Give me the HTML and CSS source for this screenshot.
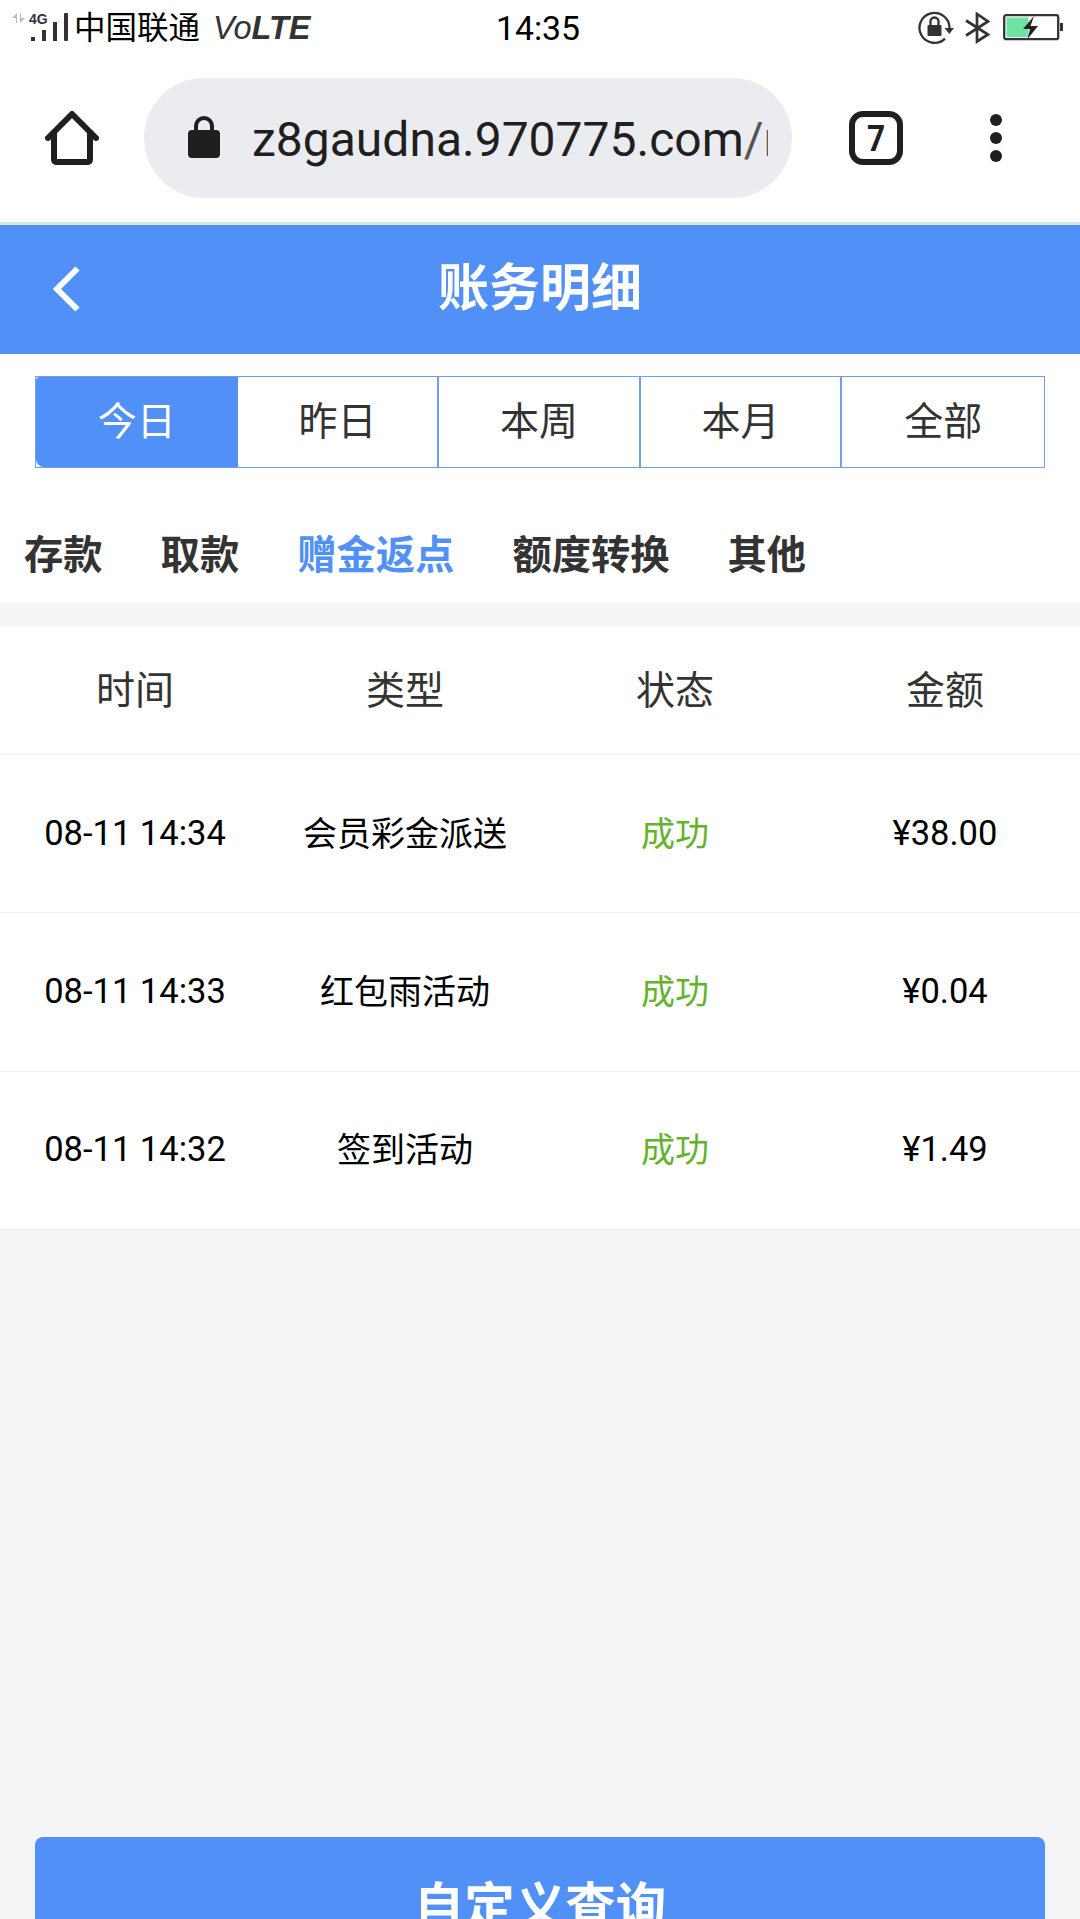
FILE: index.html
```html
<!DOCTYPE html>
<html lang="zh-CN">
<head>
<meta charset="utf-8">
<title>账务明细</title>
<link rel="stylesheet" href="styles.css">
</head>
<body>
<div class="status">
  <div class="status-left">
    <svg class="signal" width="58" height="34" viewBox="0 0 58 34">
      <path d="M0 7l5-5v10H4V7zM8 2h1v5h4l-5 5z" fill="#bdbdbd"/>
      <g fill="#333"><rect x="19" y="26" width="4" height="4"/><rect x="30" y="19" width="4" height="11"/><rect x="41" y="11" width="4" height="19"/><rect x="52" y="2" width="4" height="28" rx="1"/></g>
      <text class="net" x="17" y="13">4G</text>
    </svg>
    <span class="carrier">中国联通</span>
    <span class="volte">Vo<b>LTE</b></span>
  </div>
  <span class="clock">14:35</span>
  <div class="status-right">
    <svg width="37" height="34" viewBox="0 0 37 34">
      <path d="M31.500 17A15 15 0 1 0 27 27.600" fill="none" stroke="#333" stroke-width="2.300"/>
      <path d="M26.500 17H36l-4.700 6z" fill="#333"/>
      <rect x="9.500" y="14" width="14" height="11" rx="1" fill="#333"/>
      <path d="M12.500 15v-4.500a4 4 0 0 1 8 0V15" fill="none" stroke="#333" stroke-width="2.300"/>
    </svg>
    <svg width="26" height="34" viewBox="0 0 26 34"><path d="M1 9.500l22 14-11 7V3l11 7.500L1 24.500" fill="none" stroke="#333" stroke-width="2.700"/></svg>
    <svg class="battery" width="61" height="28" viewBox="0 0 61 28">
      <rect x="1.200" y="1.200" width="54" height="24" rx="2" fill="#fff" stroke="#333" stroke-width="2.300"/>
      <rect x="3.500" y="3.500" width="22" height="19.500" fill="#70e3a4"/>
      <path d="M31 2L20 15h7l-2.500 10L35 12h-7.500z" fill="#222"/>
      <rect x="57" y="9" width="3" height="8" fill="#333"/>
    </svg>
  </div>
</div>
<div class="browser">
  <svg class="home" width="54" height="54" viewBox="0 0 54 54" fill="none" stroke="#1f1f1f" stroke-width="6">
    <path d="M3 27L27 3l24 24" stroke-linecap="round" stroke-linejoin="round"/><path d="M9 22v26q0 3 3 3h30q3 0 3-3V22"/>
  </svg>
  <div class="address">
    <svg class="lock" width="32" height="42" viewBox="0 0 32 42"><rect y="14" width="32" height="28" rx="4" fill="#1f1f1f"/><path d="M8 15v-5a8 8 0 0 1 16 0v5" fill="none" stroke="#1f1f1f" stroke-width="4"/></svg>
    <div class="url">z8gaudna.970775.com<span class="path">/r</span></div>
  </div>
  <div class="tabs-count"><span>7</span></div>
  <svg class="more" width="12" height="48" viewBox="0 0 12 48" fill="#1f1f1f"><circle cx="6" cy="6" r="6"/><circle cx="6" cy="24" r="6"/><circle cx="6" cy="42" r="6"/></svg>
</div>
<header class="header">
  <svg class="back" width="28" height="46" viewBox="0 0 28 46"><path d="M25.500 2.500L5 23l20.500 20.500" fill="none" stroke="#fff" stroke-width="6"/></svg>
  <h1 class="title">账务明细</h1>
</header>
<section class="filters">
  <div class="range"><span class="on">今日</span><span>昨日</span><span>本周</span><span>本月</span><span>全部</span></div>
  <nav class="kinds"><span>存款</span><span>取款</span><span class="current">赠金返点</span><span>额度转换</span><span>其他</span></nav>
</section>
<section class="table">
  <div class="row head"><span>时间</span><span>类型</span><span>状态</span><span>金额</span></div>
  <div class="row"><span class="num">08-11 14:34</span><span>会员彩金派送</span><span class="ok">成功</span><span class="num">¥38.00</span></div>
  <div class="row"><span class="num">08-11 14:33</span><span>红包雨活动</span><span class="ok">成功</span><span class="num">¥0.04</span></div>
  <div class="row"><span class="num">08-11 14:32</span><span>签到活动</span><span class="ok">成功</span><span class="num">¥1.49</span></div>
</section>
<button class="query">自定义查询</button>
</body>
</html>
```
FILE: styles.css
```css
* { box-sizing: border-box; }
body {
  margin: 0;
  width: 1080px;
  height: 1919px;
  overflow: hidden;
  display: flex;
  flex-direction: column;
  background: #f5f5f8;
  color: #333;
  font-family: Roboto, "Noto Sans CJK SC", sans-serif;
}
svg { display: block; flex: none; }
.status {
  height: 57px;
  flex: none;
  display: grid;
  grid-template-columns: 1fr auto 1fr;
  align-items: center;
  padding: 0 16px 2px 12px;
  background: #fff;
  color: #000;
}
.status-left, .status-right { display: flex; align-items: center; }
.status-right { justify-content: flex-end; gap: 10px; }
.battery { margin-left: 2px; }
.net { font: bold 14px "Liberation Sans", sans-serif; fill: #333; }
.carrier { font-size: 31.500px; line-height: 50px; margin-left: 4px; padding-top: 2px; }
.volte { font: italic 32.500px "Liberation Sans", sans-serif; color: #333; margin-left: 13px; padding-top: 2px; }
.clock { font-size: 33.800px; padding-top: 2px; }
.browser {
  height: 168px;
  flex: none;
  display: flex;
  align-items: flex-start;
  padding: 21px 78px 0 45px;
  background: #fff;
  border-bottom: 3px solid #dce3e7;
}
.home { margin-top: 33px; }
.address {
  width: 648px;
  height: 120px;
  margin-left: 45px;
  padding: 0 24px 0 44px;
  border-radius: 60px;
  background: #ebecf0;
  display: flex;
  align-items: center;
}
.lock { margin-bottom: 2px; }
.url {
  width: 516px;
  margin-left: 32px;
  padding-top: 2px;
  overflow: hidden;
  white-space: nowrap;
  font-size: 48px;
  color: #1f1f1f;
}
.path { color: #555; }
.tabs-count {
  width: 54px;
  height: 54px;
  margin: 33px 0 0 57px;
  border: 6px solid #1f1f1f;
  border-radius: 14px;
  font-weight: bold;
  font-size: 36px;
  line-height: 44px;
  text-align: center;
  color: #1f1f1f;
}
.tabs-count span { display: block; transform: scaleX(.88); }
.more { margin: 36px 0 0 auto; }
.header {
  height: 129px;
  flex: none;
  display: grid;
  grid-template-columns: 1fr auto 1fr;
  align-items: center;
  padding: 0 52px;
  background: #5090f7;
}
.back { margin-bottom: 2px; }
.title { grid-column: 2; margin: 0; font-size: 51px; line-height: 74px; color: #fff; padding-bottom: 2px; }
.filters { height: 249px; flex: none; padding-top: 22px; background: #fff; }
.range {
  height: 92px;
  margin: 0 35px;
  display: grid;
  grid-template-columns: repeat(5, 1fr);
  border: 1px solid #6fa0ed;
  font-size: 39px;
  line-height: 90px;
  text-align: center;
}
.range span + span { border-right: 2px solid #6fa0ed; }
.range span:last-child { border-right: 0; }
.range .on { background: #5090f7; color: #fff; border-radius: 4px 0 0 8px; }
.kinds { display: flex; gap: 58px; padding: 59px 24px 0; font-size: 39.300px; line-height: 58px; font-weight: bold; }
.current { color: #5090f7; }
.table { margin-top: 23px; flex: none; border-bottom: 1px solid #eee; }
.row {
  height: 158.300px;
  display: grid;
  grid-template-columns: repeat(4, 1fr);
  align-items: center;
  text-align: center;
  background: #fff;
  color: #000;
  font-size: 34px;
  line-height: 50px;
  border-top: 1px solid #eee;
}
.num { font-size: 34.500px; padding-bottom: 2px; }
.head { height: 128px; border: 0; font-size: 39px; color: #333; padding-top: 2px; }
.row .ok { color: #64b32c; }
.query {
  width: 1010px;
  height: 130px;
  flex: none;
  margin: auto 35px -48px;
  padding: 0;
  border: 0;
  border-radius: 8px;
  background: #5090f7;
  color: #fff;
  font: bold 50.500px/130px Roboto, "Noto Sans CJK SC", sans-serif;
  padding-top: 5px;
}
```
